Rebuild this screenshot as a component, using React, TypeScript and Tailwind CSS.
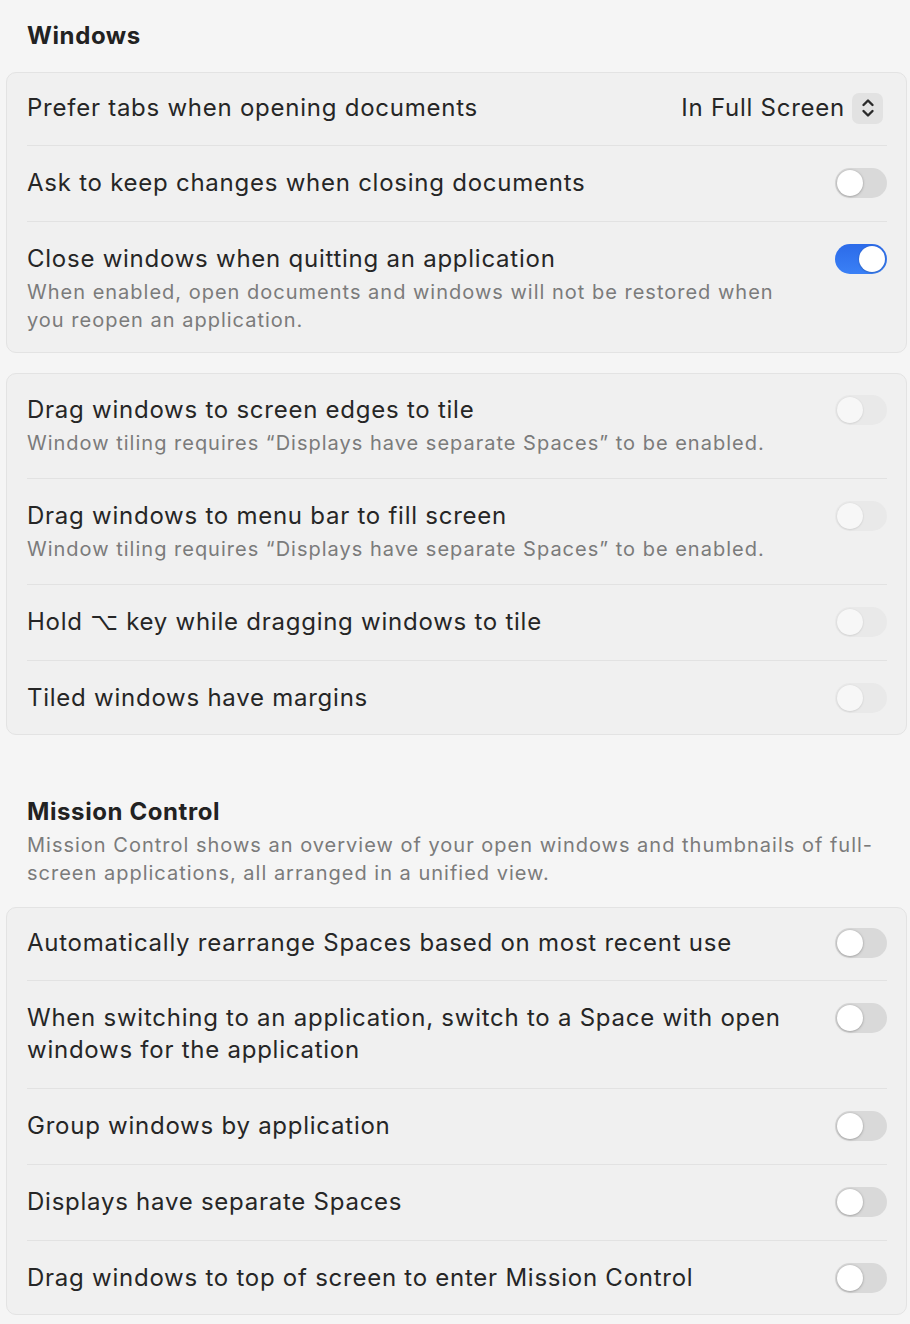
import { ReactNode } from 'react'

type Row = {
  title: ReactNode
  desc?: string
  control: ReactNode
}

function Toggle({ on = false, disabled = false }: { on?: boolean; disabled?: boolean }) {
  if (on) {
    return (
      <div className="relative w-[52px] h-[30px] rounded-full bg-gradient-to-b from-[#2c6be9] to-[#3a80f6] flex-shrink-0">
        <div className="absolute right-[2px] top-[2px] w-[26px] h-[26px] rounded-full bg-white shadow-[0_0.5px_2px_rgba(0,0,0,0.3)]" />
      </div>
    )
  }
  return (
    <div
      className={`relative w-[52px] h-[30px] rounded-full flex-shrink-0 ${
        disabled ? 'bg-[#e9e9e9]' : 'bg-[#d9d9d9]'
      }`}
    >
      <div
        className={`absolute left-[2px] top-[2px] w-[26px] h-[26px] rounded-full ${
          disabled
            ? 'bg-[#f7f7f7] shadow-[0_0.5px_2px_rgba(0,0,0,0.15)]'
            : 'bg-white shadow-[0_0.5px_2.5px_rgba(0,0,0,0.35)]'
        }`}
      />
    </div>
  )
}

function PopUp({ value }: { value: string }) {
  return (
    <div className="flex items-center gap-[7px] mr-[4px] flex-shrink-0">
      <span className="text-[24px] leading-[32px] tracking-[0.75px] text-[#262626]">{value}</span>
      <div className="w-[31px] h-[31px] rounded-[7px] bg-[#e2e2e2] flex items-center justify-center">
        <svg width="14" height="22" viewBox="0 0 14 22" fill="none" stroke="#2a2a2a" strokeWidth="2.4" strokeLinecap="round" strokeLinejoin="round">
          <path d="M2.5 8 L7 3.5 L11.5 8" />
          <path d="M2.5 14 L7 18.5 L11.5 14" />
        </svg>
      </div>
    </div>
  )
}

function Card({ rows }: { rows: Row[] }) {
  return (
    <div className="ml-[6px] mr-[3px] rounded-[10px] border border-[#e3e3e3] bg-[#f0f0f0] pl-[20px] pr-[19px]">
      {rows.map((row, i) => {
        const first = i === 0
        const last = i === rows.length - 1
        let pb = 'pb-[22px]'
        if (row.desc) pb = last ? 'pb-[18px]' : 'pb-[21px]'
        else if (last) pb = 'pb-[20px]'
        else if (first) pb = 'pb-[21px]'
        let pt = 'pt-[21px] border-t border-[#e2e2e2]'
        if (first) pt = row.desc ? 'pt-[20px]' : 'pt-[19px]'
        return (
          <div key={i} className={`flex items-start justify-between gap-6 ${pt} ${pb}`}>
            <div className="min-w-0">
              <div className="text-[24px] leading-[32px] tracking-[0.75px] text-[#262626]">{row.title}</div>
              {row.desc && (
                <p className="mt-[3px] text-[20px] leading-[28px] tracking-[1px] text-[#7b7b7b]">{row.desc}</p>
              )}
            </div>
            <div className="h-[32px] flex items-center">{row.control}</div>
          </div>
        )
      })}
    </div>
  )
}

const tiling = 'Window tiling requires \u201cDisplays have separate Spaces\u201d to be enabled.'

export default function App() {
  return (
    <div
      className="min-h-screen bg-[#f5f5f5] pt-[20px] pb-[10px]"
      style={{ fontFamily: 'Inter, "Noto Sans", "DejaVu Sans", sans-serif' }}
    >
      <h2 className="px-[27px] text-[24px] leading-[32px] tracking-[0.6px] font-bold text-[#222]">Windows</h2>

      <div className="mt-[20px]">
        <Card
          rows={[
            { title: 'Prefer tabs when opening documents', control: <PopUp value="In Full Screen" /> },
            { title: 'Ask to keep changes when closing documents', control: <Toggle /> },
            {
              title: 'Close windows when quitting an application',
              desc: 'When enabled, open documents and windows will not be restored when you reopen an application.',
              control: <Toggle on />
            }
          ]}
        />
      </div>

      <div className="mt-[20px]">
        <Card
          rows={[
            { title: 'Drag windows to screen edges to tile', desc: tiling, control: <Toggle disabled /> },
            { title: 'Drag windows to menu bar to fill screen', desc: tiling, control: <Toggle disabled /> },
            {
              title: (
                <>
                  Hold <span style={{ fontFamily: '"DejaVu Sans", sans-serif' }}>⌥</span> key while dragging windows to tile
                </>
              ),
              control: <Toggle disabled />
            },
            { title: 'Tiled windows have margins', control: <Toggle disabled /> }
          ]}
        />
      </div>

      <div className="mt-[61px] px-[27px]">
        <h2 className="text-[24px] leading-[32px] tracking-[0.6px] font-bold text-[#222]">Mission Control</h2>
        <p className="mt-[3px] text-[20px] leading-[28px] tracking-[1px] text-[#7b7b7b]">
          Mission Control shows an overview of your open windows and thumbnails of full-screen applications, all arranged in a unified view.
        </p>
      </div>

      <div className="mt-[20px]">
        <Card
          rows={[
            { title: 'Automatically rearrange Spaces based on most recent use', control: <Toggle /> },
            {
              title: 'When switching to an application, switch to a Space with open windows for the application',
              control: <Toggle />
            },
            { title: 'Group windows by application', control: <Toggle /> },
            { title: 'Displays have separate Spaces', control: <Toggle /> },
            { title: 'Drag windows to top of screen to enter Mission Control', control: <Toggle /> }
          ]}
        />
      </div>
    </div>
  )
}
